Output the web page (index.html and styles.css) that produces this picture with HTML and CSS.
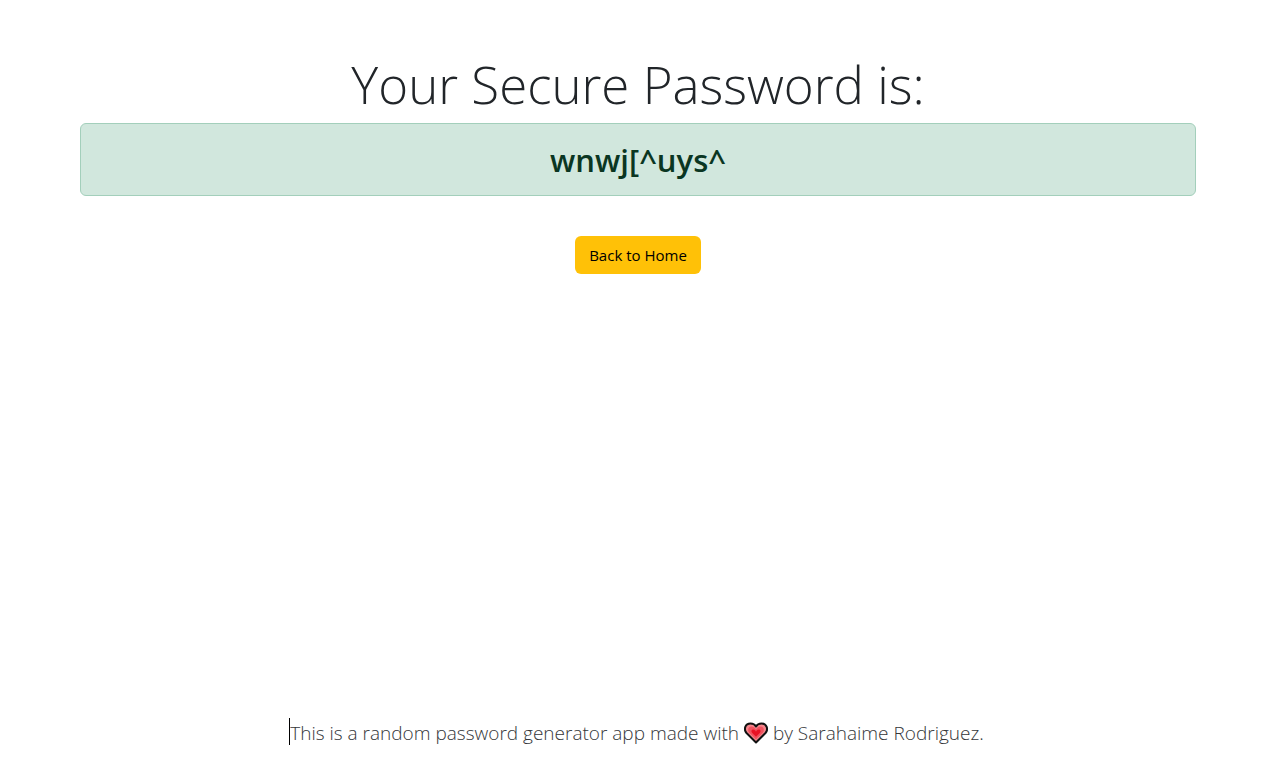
FILE: index.html
```html
<!DOCTYPE html>
<html lang="en">
<head>
<meta charset="utf-8">
<meta name="viewport" content="width=device-width, initial-scale=1">
<title>Password Generator</title>
<link rel="stylesheet" href="styles.css">
</head>
<body>
<main class="content">
  <h1 class="title">Your Secure Password is:</h1>
  <div class="password" role="status">wnwj[^uys^</div>
  <a class="button" href="#">Back to Home</a>
</main>
<footer class="footer">
  <span class="caret" aria-hidden="true"></span>
  <p class="credit">This is a random password generator app made with
    <svg class="heart" viewBox="0 0 24 22" role="img" aria-label="love">
      <path d="M12 20.500 2.500 11C-.5 7.500 1 1.500 6.500 1.500 9 1.500 11 2.700 12 4.500 13 2.700 15 1.500 17.500 1.500 23 1.500 24.500 7.500 21.500 11Z" fill="#f4868c" stroke="#111" stroke-width="2" stroke-linejoin="round"/>
      <path d="M12 17.500 5.200 10.700C3 8 4.500 4.500 7.200 4.500 9.500 4.500 11 5.700 12 7.500 13 5.700 14.500 4.500 16.800 4.500 19.500 4.500 21 8 18.800 10.700Z" fill="#f0525f"/>
      <path d="M12 14.800 8.200 11C6.500 9 8 7.500 9.200 7.500 10.700 7.500 11.500 8.500 12 9.700 12.500 8.500 13.300 7.500 14.800 7.500 16 7.500 17.500 9 15.800 11Z" fill="#e81224"/>
    </svg>
    by Sarahaime Rodriguez.</p>
</footer>
</body>
</html>
```

FILE: styles.css
```css
* { box-sizing: border-box; }
body {
  margin: 0;
  min-height: 100vh;
  display: flex;
  flex-direction: column;
  color: #212529;
  background: #fff;
  font-family: "Segoe UI", "Open Sans", "Noto Sans", sans-serif;
}
.content {
  flex: 1;
  display: flex;
  flex-direction: column;
  align-items: center;
  padding: 51px 77px 0 80px;
}
.title {
  margin: 0 0 5px;
  font-size: 51px;
  line-height: 67px;
  font-weight: 300;
}
.password {
  width: 100%;
  padding: 17px 16px 15px;
  border: 1px solid #a3cfbb;
  border-radius: 6px;
  background: #d1e7dd;
  color: #0a3622;
  font-size: 31px;
  line-height: 39px;
  font-weight: 600;
  text-align: center;
}
.button {
  margin-top: 40px;
  padding: 7px 14px;
  border-radius: 6px;
  background: #ffc107;
  color: #000;
  font-size: 15px;
  line-height: 24px;
  text-decoration: none;
}
.footer {
  display: flex;
  justify-content: center;
  padding-bottom: 13px;
}
.caret { width: 1px; height: 27px; background: #000; }
.credit { margin: 0; color: #343639; font-size: 19px; line-height: 30px; font-weight: 300; }
.heart { width: 24px; height: 22px; margin-bottom: 3px; vertical-align: middle; }
```
